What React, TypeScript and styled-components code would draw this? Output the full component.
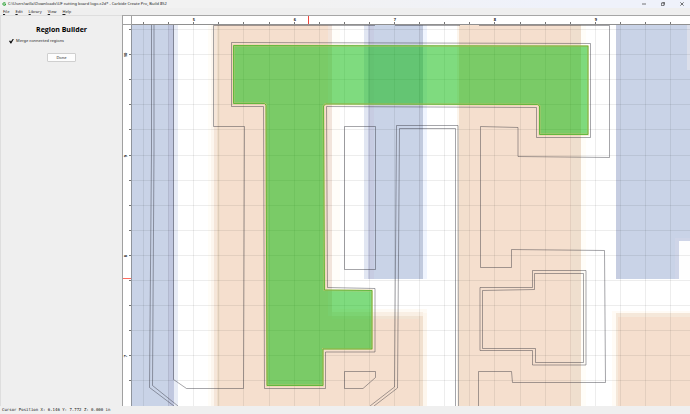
import React from "react";
import styled, { createGlobalStyle } from "styled-components";

const Global = createGlobalStyle`
  *, *::before, *::after { box-sizing: border-box; }
  body { margin: 0; background: #f0f0f0; color: #1c1c1c; }
`;

const Window = styled.div`
  display: grid;
  grid-template-rows: auto auto 1fr auto;
  height: 100vh;
  overflow: hidden;
  background: #efefef;
  font-family: "Noto Sans", "Open Sans", sans-serif;
  font-size: 4px;
  line-height: 8px;
`;

const TitleBar = styled.header`
  display: flex;
  align-items: center;
  height: 8px;
  padding-left: 2px;
  gap: 2px;
  background: linear-gradient(90deg, #f2f2f2 45%, #eff2fb 80%);
`;

const AppIcon = styled.svg`
  width: 4px;
  height: 4px;
`;

const Title = styled.h1`
  margin: 0;
  flex: 1;
  font-size: 4px;
  font-weight: 400;
  white-space: nowrap;
`;

const WindowButton = styled.button`
  display: grid;
  place-items: center;
  width: 17px;
  height: 8px;
  padding: 0;
  border: 0;
  background: none;
  svg {
    width: 4px;
    height: 4px;
    fill: none;
    stroke: #333;
    stroke-width: 1;
  }
`;

const MenuBar = styled.nav`
  display: flex;
  height: 7px;
  padding-left: 3px;
  gap: 6px;
`;

const MenuItem = styled.button`
  padding: 0;
  border: 0;
  background: none;
  color: inherit;
  font: inherit;
  line-height: 7px;
  &::first-letter { text-decoration: underline; }
`;

const Body = styled.main`
  display: grid;
  grid-template-columns: 122px 1fr;
  min-height: 0;
`;

const Panel = styled.form`
  display: flex;
  flex-direction: column;
  align-items: center;
  padding-top: 9px;
  border-top: 1px solid #dedede;
  border-left: 1px solid #dedede;
`;

const PanelTitle = styled.h2`
  margin: 0;
  font-family: "Open Sans", "Noto Sans", sans-serif;
  font-size: 7px;
  line-height: 10px;
  font-weight: 700;
  color: #000;
`;

const Option = styled.label`
  display: flex;
  align-items: center;
  align-self: stretch;
  gap: 2px;
  margin-top: 2px;
  padding-left: 8px;
  line-height: 8px;
`;

const Tick = styled.input`
  appearance: none;
  width: 5px;
  height: 5px;
  margin: 0;
  border: 1px solid #e2e2e2;
  background: #fff;
  &:checked {
    border: 0;
    background: #111;
    clip-path: polygon(0 50%, 22% 40%, 38% 62%, 78% 5%, 100% 5%, 45% 100%, 30% 100%);
  }
`;

const DoneButton = styled.button`
  width: 29px;
  height: 9px;
  margin-top: 8px;
  padding: 0;
  border: 1px solid #cfcfcf;
  border-radius: 1px;
  background: #fdfdfd;
  color: inherit;
  font: inherit;
  line-height: 6px;
`;

const Viewport = styled.section`
  display: grid;
  grid-template: 9px 1fr / 9px 1fr;
  min-width: 0;
  min-height: 0;
  border-top: 1px solid #a6a6a6;
  border-left: 1px solid #a0a0a0;
  background: #fff;
`;

const Corner = styled.div`
  border-right: 1px solid #a0a0a0;
  border-bottom: 1px solid #a0a0a0;
`;

const Drawing = styled.svg`
  display: block;
  width: 100%;
  height: 100%;
  min-width: 0;
  min-height: 0;
  overflow: hidden;
`;

const RulerTop = styled(Drawing)`
  border-bottom: 1px solid #909090;
`;

const RulerLeft = styled(Drawing)`
  border-right: 1px solid #8f949c;
`;

const Label = styled.text`
  font-family: "Noto Sans", "Open Sans", sans-serif;
  font-size: 4px;
  font-weight: 700;
  fill: #222;
  text-anchor: middle;
`;

const StatusBar = styled.footer`
  height: 8px;
  padding-left: 2px;
  font-family: "DejaVu Sans Mono", "Liberation Mono", monospace;
  font-size: 4px;
  line-height: 8px;
  color: #111;
  white-space: pre;
`;

const range = (n: number) => Array.from({ length: n }, (_, i) => i);
const columns = range(24).map((i) => Math.round(143 + i * 25.1));
const rows = range(20).map((i) => Math.round(29 + i * 25.1));

type Area = [x: number, y: number, w: number, h: number, fill: string];

const areas: Area[] = [
  // left blue band
  [131, 24, 43, 400, "#c9d3e7"],
  [168, 24, 6, 400, "#c0c7df"],
  [174, 24, 4, 400, "#e8ecf6"],
  // wide peach column
  [208, 24, 3, 400, "#fffdf8"],
  [211, 24, 3, 400, "#fcf6ee"],
  [214, 24, 4, 400, "#f5e6d9"],
  [218, 24, 110, 400, "#f5dfce"],
  [217, 24, 3, 400, "#efddc9"],
  [328, 24, 4, 292, "#f2e4db"],
  [332, 24, 8, 288, "#fffdf9"],
  // peach block under the centre
  [332, 309, 95, 7, "#fefaf4"],
  [332, 312, 91, 4, "#f9efe4"],
  [327, 316, 96, 90, "#f5dfce"],
  [332, 316, 91, 3, "#f1e3d3"],
  [419, 316, 4, 90, "#f1e0cf"],
  [423, 313, 4, 93, "#fdf6ed"],
  // centre blue band
  [364, 24, 4, 255, "#e1e6f2"],
  [368, 24, 55, 255, "#c9d3e7"],
  [368, 24, 6, 255, "#c7cce2"],
  [419, 24, 4, 255, "#c1cade"],
  [423, 24, 4, 255, "#eff4fe"],
  // right peach column
  [457, 24, 2, 382, "#fcf5ec"],
  [459, 24, 122, 382, "#f5dfce"],
  [459, 24, 10, 382, "#f3dfcd"],
  [571, 24, 10, 382, "#efdfce"],
  [581, 24, 5, 382, "#fffdf8"],
  // right blue block with its notch
  [616, 24, 80, 255, "#c9d3e7"],
  [616, 24, 4, 255, "#c6cde1"],
  [675, 238, 20, 41, "#cfd5e8"],
  [679, 241, 20, 38, "#fefefe"],
  [687, 24, 8, 46, "#dcdfea"],
  // lower right peach block
  [612, 311, 84, 110, "#fffbf5"],
  [616, 313, 80, 110, "#f5e8da"],
  [618, 317, 80, 110, "#f5dfce"],
];

const contours = [
  "M151.5 24V150L149.5 387.5L174 406",
  "M154 24V150L152.5 385.5L178 406",
  "M173.5 24V379.5L186.5 388.5H243.5L244.5 126.5H213.5V25.5H375M395 25.5H460M479 25.5H609.5V157.5L518 156.5V127.5L480.5 126.5V267.5H511.5V249.5L604.5 250.5L605.5 382.5H512.5L511.5 371.5H478.5V406",
  "M231.5 42.5L590.5 43.5V137.5H536.5V107.5L326.5 106.5L327.5 287.5L375 288.5V352H325.5V388.5H264.5L263.5 106.5H231.5Z",
  "M344.5 126.5H375.5V269.5H344.5Z",
  "M370 406L394.5 387L396.5 125.5H458L458.5 406",
  "M374 406L397.5 388L399.5 128.5H455.5V406",
  "M344.5 371.5H375.5V377.5L363 388.5H344.5Z",
  "M480 287.5H532.5V270.5H586V365H532.5V350.5H480Z",
  "M482.5 290.5L534.5 289.5V273.5H583.5V362.5H535.5V348.5H482.5Z",
];

const selected =
  "M233.5 45.5L588 46V134.5H539.5V106L537.5 104.5L325.5 104L323.5 106L324.5 290L372 290.5V349H323V385.5H267L266 105L264.5 103.5H233.5Z";

export default function App() {
  return (
    <>
      <Global />
      <Window>
        <TitleBar>
          <AppIcon viewBox="0 0 8 8" aria-hidden="true">
            <path d="M7 2A3 3 0 1 0 7 6V4H4" fill="none" stroke="#2da336" strokeWidth="2" />
          </AppIcon>
          <Title>C:\Users\willa\Downloads\UF cutting board logo.c2d* - Carbide Create Pro, Build 852</Title>
          <WindowButton aria-label="Minimize">
            <svg viewBox="0 0 6 6"><path d="M0 3H6" /></svg>
          </WindowButton>
          <WindowButton aria-label="Restore">
            <svg viewBox="0 0 6 6"><path d="M.5 1.5H4.5V5.5H.5ZM2 .5H5.5V4" /></svg>
          </WindowButton>
          <WindowButton aria-label="Close">
            <svg viewBox="0 0 6 6"><path d="M.5 .5L5.5 5.5M5.5 .5L.5 5.5" /></svg>
          </WindowButton>
        </TitleBar>
        <MenuBar>
          {["File", "Edit", "Library", "View", "Help"].map((name) => (
            <MenuItem key={name}>{name}</MenuItem>
          ))}
        </MenuBar>
        <Body>
          <Panel onSubmit={(e) => e.preventDefault()}>
            <PanelTitle>Region Builder</PanelTitle>
            <Option>
              <Tick type="checkbox" defaultChecked />
              Merge connected regions
            </Option>
            <DoneButton type="submit">Done</DoneButton>
          </Panel>
          <Viewport>
            <Corner />
            <RulerTop viewBox="132 16 558 8" preserveAspectRatio="xMinYMin slice">
              {columns.map((x) => (
                <path key={x} d={`M${x + 0.5} 22V24`} stroke="#777" />
              ))}
              {[5, 6, 7, 8, 9].map((n, i) => (
                <Label key={n} x={columns[2 + i * 4] + 1} y={21}>{n}</Label>
              ))}
              <path d="M308.5 16V24" stroke="#f0443a" />
            </RulerTop>
            <RulerLeft viewBox="123 25 8 381" preserveAspectRatio="xMinYMin slice">
              {rows.map((y) => (
                <path key={y} d={`M129 ${y + 0.5}H131`} stroke="#777" />
              ))}
              {[10, 9, 8, 7].map((n, i) => (
                <Label key={n} transform={`translate(127 ${rows[1 + i * 4] + 1}) rotate(-90)`}>{n}</Label>
              ))}
              <path d="M123 278.5H131" stroke="#ff6a5e" />
            </RulerLeft>
            <Drawing viewBox="132 25 558 381" preserveAspectRatio="xMinYMin slice" role="img" aria-label="Design canvas">
              {areas.map(([x, y, w, h, fill], i) => (
                <rect key={i} x={x} y={y} width={w} height={h} fill={fill} shapeRendering="crispEdges" />
              ))}
              <g stroke="#000" strokeOpacity="0.07">
                {columns.map((x) => <path key={x} d={`M${x + 0.5} 0V600`} />)}
                {rows.map((y) => <path key={y} d={`M0 ${y + 0.5}H1400`} />)}
              </g>
              <g fill="none" stroke="#2b2b35" strokeOpacity="0.42">
                {contours.map((d) => <path key={d} d={d} />)}
              </g>
              <path d={selected} fill="#00b700" fillOpacity="0.5" stroke="#e9bd70" strokeOpacity="0.5" strokeWidth="2" />
              <path d={selected} fill="none" stroke="#4fb531" strokeOpacity="0.85" />
            </Drawing>
          </Viewport>
        </Body>
        <StatusBar>Cursor Position X: 6.146 Y: 7.772 Z: 0.000 in</StatusBar>
      </Window>
    </>
  );
}
